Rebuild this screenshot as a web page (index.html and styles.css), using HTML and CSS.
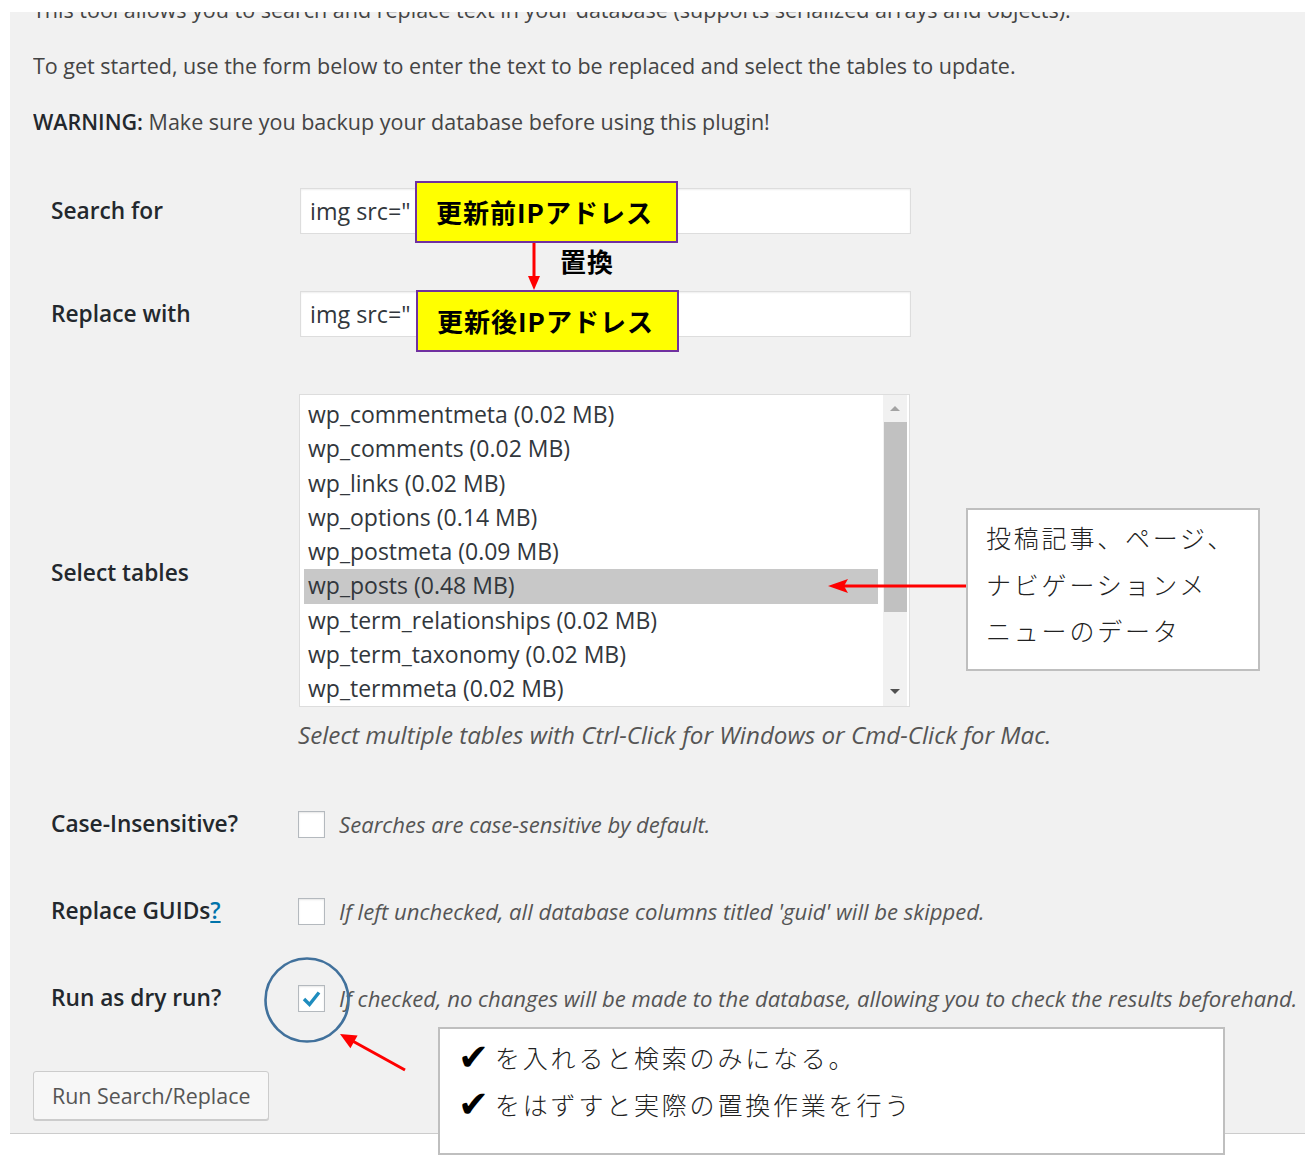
FILE: index.html
```html
<!DOCTYPE html>
<html lang="ja">
<head>
<meta charset="utf-8">
<title>Search Replace DB</title>
<link rel="stylesheet" href="styles.css">
</head>
<body>
<div class="panel">
  <div class="intro-clip">
    <div class="intro">
      <p>This tool allows you to search and replace text in your database (supports serialized arrays and objects).</p>
      <p>To get started, use the form below to enter the text to be replaced and select the tables to update.</p>
      <p><strong>WARNING:</strong> Make sure you backup your database before using this plugin!</p>
    </div>
  </div>

  <div class="form">
    <div class="label">Search for</div>
    <div class="field">
      <input class="text-input" type="text" value="img src=&quot;">
      <div class="ip-box ip-before">更新前IPアドレス</div>
      <svg class="down-arrow" width="16" height="48" viewBox="0 0 16 48">
        <line x1="8" y1="0" x2="8" y2="36" stroke="#ff0000" stroke-width="3"/>
        <polygon points="2,33 14,33 8,47" fill="#ff0000"/>
      </svg>
      <span class="replace-note">置換</span>
    </div>

    <div class="label">Replace with</div>
    <div class="field">
      <input class="text-input" type="text" value="img src=&quot;">
      <div class="ip-box ip-after">更新後IPアドレス</div>
    </div>

    <div class="label">Select tables</div>
    <div class="field">
      <div class="listbox">
        <div class="options">
          <div class="option">wp_commentmeta (0.02 MB)</div>
          <div class="option">wp_comments (0.02 MB)</div>
          <div class="option">wp_links (0.02 MB)</div>
          <div class="option">wp_options (0.14 MB)</div>
          <div class="option">wp_postmeta (0.09 MB)</div>
          <div class="option selected">wp_posts (0.48 MB)</div>
          <div class="option">wp_term_relationships (0.02 MB)</div>
          <div class="option">wp_term_taxonomy (0.02 MB)</div>
          <div class="option">wp_termmeta (0.02 MB)</div>
        </div>
        <div class="scrollbar">
          <span class="sb-up"></span>
          <span class="sb-thumb"></span>
          <span class="sb-down"></span>
        </div>
      </div>
      <p class="description desc-tables">Select multiple tables with Ctrl-Click for Windows or Cmd-Click for Mac.</p>
      <svg class="left-arrow" width="138" height="16" viewBox="0 0 138 16">
        <line x1="16" y1="8" x2="138" y2="8" stroke="#ff0000" stroke-width="3"/>
        <polygon points="0,8 20,1 16,8 20,15" fill="#ff0000"/>
      </svg>
      <div class="note note-tables">投稿記事、ページ、<br>ナビゲーションメ<br>ニューのデータ</div>
    </div>

    <div class="label">Case-Insensitive?</div>
    <div class="field check-field">
      <span class="checkbox"></span>
      <span class="description">Searches are case-sensitive by default.</span>
    </div>

    <div class="label">Replace GUIDs<a class="help-link" href="#">?</a></div>
    <div class="field check-field">
      <span class="checkbox"></span>
      <span class="description">If left unchecked, all database columns titled 'guid' will be skipped.</span>
    </div>

    <div class="label">Run as dry run?</div>
    <div class="field check-field">
      <span class="checkbox">
        <svg width="25" height="25" viewBox="0 0 25 25"><path d="M5 13 L10.5 18.5 L20 6.5" fill="none" stroke="#1e8cbe" stroke-width="3.4"/></svg>
      </span>
      <span class="description">If checked, no changes will be made to the database, allowing you to check the results beforehand.</span>
      <svg class="circle-mark" width="86" height="86" viewBox="0 0 86 86">
        <circle cx="43" cy="43" r="41.5" fill="none" stroke="#41719c" stroke-width="2.6"/>
      </svg>
      <svg class="diag-arrow" width="90" height="60" viewBox="0 0 90 60">
        <line x1="76" y1="47" x2="24" y2="18.3" stroke="#ff0000" stroke-width="3"/>
        <polygon points="11,11 28.6,12.4 21.4,25.2" fill="#ff0000"/>
      </svg>
      <div class="note note-dryrun">
        <div class="note-line"><span class="tick">✔</span>を入れると検索のみになる。</div>
        <div class="note-line"><span class="tick">✔</span>をはずすと実際の置換作業を行う</div>
      </div>
    </div>
  </div>

  <div class="submit">
    <button class="button" type="button">Run Search/Replace</button>
  </div>
</div>
</body>
</html>
```

FILE: styles.css
```css
html, body {
  margin: 0;
  padding: 0;
  background: #ffffff;
}

body {
  font-family: "Open Sans", "Noto Sans", "Noto Sans CJK JP", sans-serif;
  font-size: 21.5px;
  color: #444444;
  min-height: 1160px;
  position: relative;
}

.panel {
  margin: 12px 0 0 10px;
  width: 1295px;
  background: #f1f1f1;
  border-bottom: 1px solid #cccccc;
  padding: 0 0 13px 23px;
  box-sizing: border-box;
  position: relative;
}

.intro-clip {
  overflow: hidden;
}

.intro {
  margin-top: -17px;
  display: flex;
  flex-direction: column;
  gap: 26px;
}

.intro p {
  margin: 0;
  line-height: 30px;
  white-space: nowrap;
}

.intro strong {
  font-weight: 600;
  color: #23282d;
}

.form {
  margin: 51px 0 0 18px;
  display: grid;
  grid-template-columns: 248px 1fr;
  row-gap: 57px;
  align-items: center;
}

.label {
  font-weight: 600;
  font-size: 22.7px;
  color: #23282d;
  line-height: 30px;
  white-space: nowrap;
}

.help-link {
  color: #0073aa;
  text-decoration: underline;
}

.field {
  position: relative;
}

.text-input {
  display: block;
  box-sizing: border-box;
  width: 611px;
  height: 46px;
  margin: 0 0 0 1px;
  padding: 0 9px;
  border: 1px solid #dddddd;
  background: #ffffff;
  box-shadow: inset 0 1px 2px rgba(0, 0, 0, 0.07);
  font-family: "Open Sans", "Noto Sans", sans-serif;
  font-size: 23.3px;
  color: #32373c;
  outline: none;
}

.ip-box {
  position: absolute;
  box-sizing: border-box;
  width: 263px;
  height: 62px;
  background: #ffff00;
  border: 2px solid #7030a0;
  color: #000000;
  font-family: "Noto Sans CJK JP", sans-serif;
  font-weight: 700;
  font-size: 26px;
  line-height: 58px;
  padding-left: 19px;
  letter-spacing: 1px;
  white-space: nowrap;
}

.ip-before {
  left: 116px;
  top: -7px;
}

.ip-after {
  left: 117px;
  top: -1px;
}

.down-arrow {
  position: absolute;
  left: 227px;
  top: 55px;
}

.replace-note {
  position: absolute;
  left: 261px;
  top: 58px;
  font-family: "Noto Sans CJK JP", sans-serif;
  font-weight: 700;
  font-size: 26px;
  line-height: 30px;
  color: #000000;
  letter-spacing: 1px;
}

.listbox {
  box-sizing: border-box;
  width: 611px;
  height: 313px;
  border: 1px solid #dddddd;
  background: #ffffff;
  display: flex;
  padding: 3px 0 0 4px;
  overflow: hidden;
}

.options {
  width: 574px;
  flex: none;
}

.option {
  height: 34.25px;
  line-height: 32px;
  padding-left: 4px;
  font-size: 23px;
  color: #32373c;
  white-space: nowrap;
}

.option.selected {
  background: #c8c8c8;
}

.scrollbar {
  position: relative;
  flex: none;
  width: 24px;
  margin-left: 5px;
  margin-top: -3px;
  height: 311px;
  background: #f1f1f1;
}

.sb-up,
.sb-down {
  position: absolute;
  left: 7px;
  width: 0;
  height: 0;
  border-left: 5px solid transparent;
  border-right: 5px solid transparent;
}

.sb-up {
  top: 11px;
  border-bottom: 5px solid #a3a3a3;
}

.sb-down {
  top: 294px;
  border-top: 5px solid #505050;
}

.sb-thumb {
  position: absolute;
  left: 1px;
  right: 0;
  top: 27px;
  height: 190px;
  background: #c1c1c1;
}

.description {
  font-style: italic;
  font-size: 22.1px;
  color: #555555;
  line-height: 30px;
  white-space: nowrap;
}

.desc-tables {
  margin: 13px 0 0 -1px;
  padding-bottom: 2px;
  font-size: 24.2px;
}

.left-arrow {
  position: absolute;
  left: 529px;
  top: 184px;
}

.note {
  position: absolute;
  box-sizing: border-box;
  background: #ffffff;
  border: 2px solid #bfbfbf;
  font-family: "Noto Sans CJK JP", sans-serif;
  font-weight: 300;
  color: #222222;
  font-size: 25px;
  letter-spacing: 2.8px;
  white-space: nowrap;
  z-index: 2;
}

.note-tables {
  left: 667px;
  top: 114px;
  width: 294px;
  height: 163px;
  padding: 4px 0 0 18px;
  line-height: 46.5px;
}

.check-field {
  display: flex;
  align-items: center;
  gap: 14px;
  height: 30px;
}

.checkbox {
  box-sizing: border-box;
  flex: none;
  width: 27px;
  height: 27px;
  margin-left: -1px;
  border: 1px solid #b4b9be;
  background: #ffffff;
  box-shadow: inset 0 1px 2px rgba(0, 0, 0, 0.1);
  display: flex;
  align-items: center;
  justify-content: center;
}

.circle-mark {
  position: absolute;
  left: -35px;
  top: -26px;
}

.diag-arrow {
  position: absolute;
  left: 30px;
  top: 40px;
}

.note-dryrun {
  left: 139px;
  top: 44px;
  width: 787px;
  height: 128px;
  padding: 5px 0 0 20px;
}

.note-line {
  line-height: 47px;
  height: 47px;
  display: flex;
  align-items: center;
}

.tick {
  font-family: "DejaVu Sans", sans-serif;
  font-weight: 700;
  font-size: 37px;
  line-height: 47px;
  color: #000000;
  width: 37px;
  letter-spacing: 0;
  margin-left: -2px;
}

.submit {
  margin-top: 58px;
}

.button {
  box-sizing: border-box;
  height: 49px;
  padding: 0 18px;
  background: #f7f7f7;
  border: 1px solid #cccccc;
  border-radius: 3px;
  box-shadow: 0 1px 0 #cccccc;
  font-family: "Open Sans", "Noto Sans", sans-serif;
  font-size: 21.4px;
  color: #555555;
  cursor: pointer;
}
```
